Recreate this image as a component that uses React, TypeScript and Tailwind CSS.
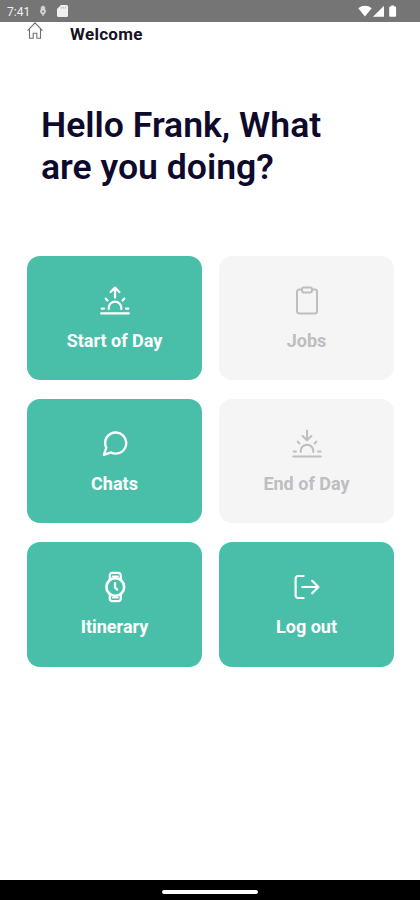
import { ReactNode } from "react";

interface ITile {
    name: string;
    icon: ReactNode;
    disabled?: boolean;
}

const Icon = ({ children }: { children: ReactNode }) => (
    <svg
        className="h-8 w-8"
        viewBox="0 0 32 32"
        fill="none"
        stroke="currentColor"
        strokeWidth="2.2"
        strokeLinecap="round"
        strokeLinejoin="round"
    >
        {children}
    </svg>
);

const Sun = () => (
    <path d="M9.7 24V23a6.3 6.3 0 0 1 12.600 0v1M2.600 23.600h2.400M27 23.600h2.400M6.700 13.600l1.700 1.900M25.300 13.600l-1.700 1.900M2.200 28.400h27.600" />
);

const tiles: ITile[] = [
    {
        name: "Start of Day",
        icon: (
            <Icon>
                <path d="M16 12.6V3M11.6 7 16 2.6 20.4 7" />
                <Sun />
            </Icon>
        ),
    },
    {
        name: "Jobs",
        disabled: true,
        icon: (
            <Icon>
                <g strokeWidth="2">
                    <path d="M11 4.6H8.2A2.2 2.2 0 0 0 6 6.8v19.4a2.2 2.2 0 0 0 2.2 2.2h15.6a2.2 2.2 0 0 0 2.2-2.2V6.8a2.2 2.2 0 0 0-2.2-2.2H21" />
                    <rect x="11" y="2.4" width="10" height="5" rx="1.8" />
                </g>
            </Icon>
        ),
    },
    {
        name: "Chats",
        icon: (
            <Icon>
                <g transform="translate(1.2 .8) scale(1.24)" strokeWidth="1.9">
                    <path d="M21 11.5a8.38 8.38 0 0 1-.9 3.8 8.5 8.5 0 0 1-7.6 4.7 8.38 8.38 0 0 1-3.8-.9L3 21l1.9-5.7a8.38 8.38 0 0 1-.9-3.8 8.5 8.5 0 0 1 4.7-7.6 8.38 8.38 0 0 1 3.8-.9h.5a8.48 8.48 0 0 1 8 8z" />
                </g>
            </Icon>
        ),
    },
    {
        name: "End of Day",
        disabled: true,
        icon: (
            <Icon>
                <g strokeWidth="2">
                    <path d="M16 2.6v9.2M11.6 8 16 12.2 20.4 8" />
                    <Sun />
                </g>
            </Icon>
        ),
    },
    {
        name: "Itinerary",
        icon: (
            <Icon>
                <circle cx="16.3" cy="16" r="8.9" strokeWidth="2.6" />
                <path d="M10.8 8.6V4.3a2.4 2.4 0 0 1 2.4-2.4h6.2a2.4 2.4 0 0 1 2.4 2.4v4.3M10.8 23.4v4.3a2.4 2.4 0 0 0 2.4 2.4h6.2a2.4 2.4 0 0 0 2.4-2.4v-4.3" />
                <path d="M13.6 5.4h5.4M13.6 26.6h5.4" strokeWidth="1.6" />
                <path d="M16 12v4.4l2.2 2.2" />
            </Icon>
        ),
    },
    {
        name: "Log out",
        icon: (
            <Icon>
                <path d="M12.6 5H7a2.4 2.4 0 0 0-2.4 2.4v17.2A2.4 2.4 0 0 0 7 27h5.6" />
                <path d="M11.3 16h16M21.2 9.8l6.2 6.2-6.2 6.2" />
            </Icon>
        ),
    },
];

const StatusBar = () => {
    return <div className="flex h-[21.5px] shrink-0 items-center bg-[#757575] pl-[7px] pr-[22px] text-[#f0f0f0]">
        <span className="w-6 pt-[2px] text-[12px] leading-none">7:41</span>
        <svg className="ml-[8px] h-3 w-2" viewBox="0 0 8 12">
            <path d="M4 1a2 2 0 0 1 1.7 3A3 3 0 0 1 4.8 9L4 11 3.2 9A3 3 0 0 1 2.3 4 2 2 0 0 1 4 1z" fill="#d5d5d5" stroke="#d5d5d5" strokeWidth=".6" />
            <circle cx="4" cy="6.4" r="1" fill="#757575" />
        </svg>
        <svg className="ml-[10px] h-3 w-[11px]" viewBox="0 0 11 12" fill="currentColor">
            <path d="M4 0h5.5A1.5 1.5 0 0 1 11 1.5v9a1.5 1.5 0 0 1-1.5 1.5h-8A1.5 1.5 0 0 1 0 10.5V4z" />
            <path d="M4.3 1.8v1.8M6.3 1.8v1.8M8.3 1.8v1.8" stroke="#a5a5a5" strokeWidth=".8" />
        </svg>
        <svg className="ml-auto h-3 w-10 text-white" viewBox="0 0 40 12" fill="currentColor">
            <path d="M.3 3.2a10.5 10.5 0 0 1 13.4 0L7 11.5z" />
            <path d="M26 .7v11H15z" />
            <path d="M33.2 .5h3v1h.9a1 1 0 0 1 1 1v8.2a1 1 0 0 1-1 1h-4.9a1 1 0 0 1-1-1V2.5a1 1 0 0 1 1-1h1z" />
        </svg>
    </div>
}

const App = () => {
    return <div className="flex h-[900px] w-[420px] flex-col overflow-hidden bg-white font-[Roboto,sans-serif]">
        <StatusBar />
        <header className="flex h-[26px] shrink-0 items-start pl-[27px]">
            <svg className="h-[18px] w-4" viewBox="0 0 16 18" fill="none" stroke="#6f6f76" strokeWidth="1.1">
                <path d="M.6 8.7 8 .8l7.400 7.900M2.500 7v9.300h3.700v-5.100h3.600v5.100h3.700V7" />
            </svg>
            <h2 className="ml-[27px] mt-[2.500px] text-[17px] font-bold leading-5 tracking-[0.3px] text-[#15131f]">Welcome</h2>
        </header>
        <h1 className="mt-[56.500px] w-[320px] pl-[41px] text-[35.600px] font-semibold leading-[42px] text-[#0d0a2c]">
            <span className="whitespace-nowrap">Hello Frank, What</span> are you doing?
        </h1>
        <div className="mt-[67.500px] grid grid-cols-2 gap-x-[17px] gap-y-[18.800px] pl-[27px] pr-[26px]">
            {tiles.map((item) =>
                <button
                    key={item.name}
                    className={`flex h-[124.600px] flex-col items-center rounded-[13px] pt-[29px] ${item.disabled ? "bg-[#f5f5f5] text-[#bdbec1]" : "bg-[#49bfa9] text-white"}`}
                >
                    {item.icon}
                    <span className="mt-[13px] text-[18px] font-bold leading-[22px]">{item.name}</span>
                </button>
            )}
        </div>
        <div className="mt-auto flex h-5 shrink-0 justify-center bg-black pt-[10px]">
            <div className="h-[3.500px] w-24 rounded-full bg-white"></div>
        </div>
    </div>
}

export default App;
